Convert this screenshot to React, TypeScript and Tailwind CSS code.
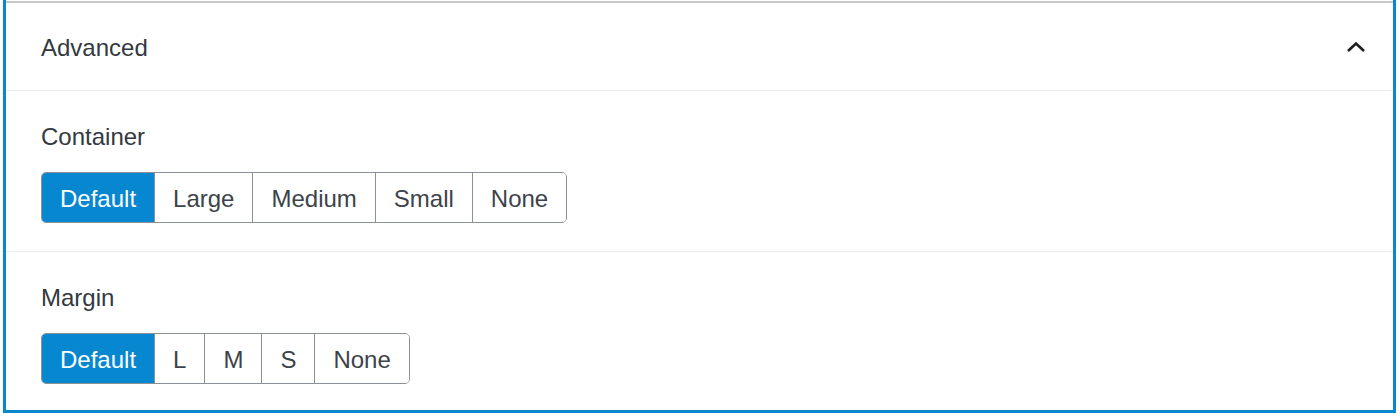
import React, { useState } from 'react';

const CONTAINER_OPTS = ['Default', 'Large', 'Medium', 'Small', 'None'];
const MARGIN_OPTS = ['Default', 'L', 'M', 'S', 'None'];

function ButtonGroup({ options, value, onChange }: { options: string[]; value: string; onChange: (v: string) => void }) {
  return (
    <div className="inline-flex rounded-[5px] border border-[#8c9197] overflow-hidden">
      {options.map((opt, i) => (
        <button
          key={opt}
          onClick={() => onChange(opt)}
          className={`h-[49px] px-[18px] pt-[2px] text-[24px] leading-none ${i > 0 ? 'border-l border-[#8c9197]' : ''} ${
            value === opt ? 'bg-[#0787d0] text-white' : 'bg-white text-[#3c434a]'
          }`}
        >
          {opt}
        </button>
      ))}
    </div>
  );
}

export default function App() {
  const [open, setOpen] = useState(true);
  const [container, setContainer] = useState('Default');
  const [margin, setMargin] = useState('Default');

  return (
    <div className="w-[1400px] h-[416px] bg-white font-['Liberation_Sans',Arial,sans-serif]">
      <div className="ml-[3px] w-[1393px] h-[413px] border-x-[3px] border-b-[3px] border-[#0787d0] flex flex-col">
        <div className="mt-[1px] h-[2px] bg-[#c6c7c9]" />

        {/* Header */}
        <button
          onClick={() => setOpen(!open)}
          className="h-[88px] flex items-center justify-between pl-[35px] pr-[27px] border-b border-[#ececec]"
        >
          <span className="pt-[2px] text-[24px] text-[#33393f]">Advanced</span>
          <svg width="20" height="14" viewBox="0 0 20 14" fill="none">
            <path d="M2 11 L10 3.5 L18 11" stroke="#1e1e1e" strokeWidth="2.6" />
          </svg>
        </button>

        {open && (
          <>
            <div className="pl-[35px] pt-[32px] pb-[28px] border-b border-[#ececec]">
              <div className="text-[24px] leading-[28px] text-[#33393f] mb-[21px]">Container</div>
              <ButtonGroup options={CONTAINER_OPTS} value={container} onChange={setContainer} />
            </div>
            <div className="pl-[35px] pt-[32px]">
              <div className="text-[24px] leading-[28px] text-[#33393f] mb-[21px]">Margin</div>
              <ButtonGroup options={MARGIN_OPTS} value={margin} onChange={setMargin} />
            </div>
          </>
        )}
      </div>
    </div>
  );
}
